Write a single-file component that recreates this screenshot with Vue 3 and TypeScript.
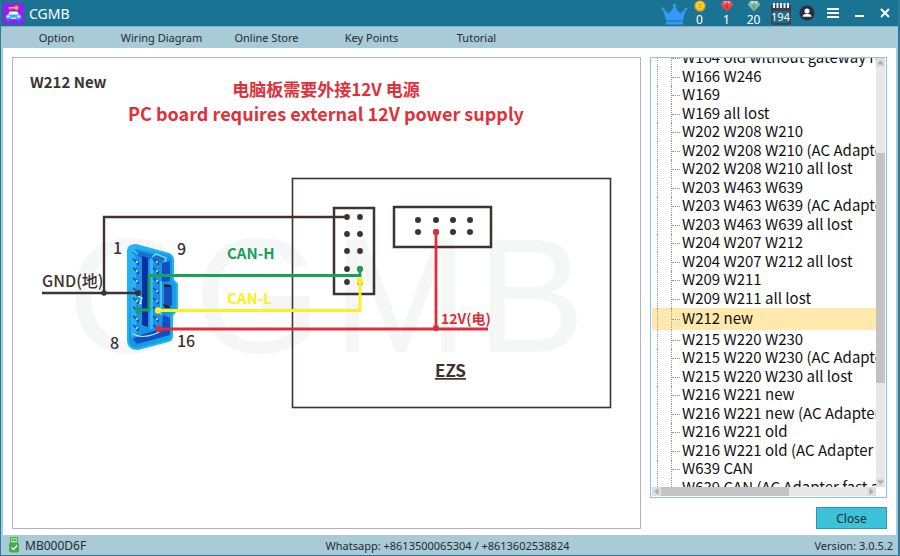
<script setup lang="ts">
import { onMounted, ref } from 'vue'

interface Point {
  x: number
  y: number
}

const menus: string[] = ['Option', 'Wiring Diagram', 'Online Store', 'Key Points', 'Tutorial']

const systems: string[] = [
  'W164 old without gateway read',
  'W166 W246',
  'W169',
  'W169 all lost',
  'W202 W208 W210',
  'W202 W208 W210 (AC Adapter fast)',
  'W202 W208 W210 all lost',
  'W203 W463 W639',
  'W203 W463 W639 (AC Adapter fast)',
  'W203 W463 W639 all lost',
  'W204 W207 W212',
  'W204 W207 W212 all lost',
  'W209 W211',
  'W209 W211 all lost',
  'W212 new',
  'W215 W220 W230',
  'W215 W220 W230 (AC Adapter fast)',
  'W215 W220 W230 all lost',
  'W216 W221 new',
  'W216 W221 new (AC Adapter fast)',
  'W216 W221 old',
  'W216 W221 old (AC Adapter fast)',
  'W639 CAN',
  'W639 CAN (AC Adapter fast all)',
]

const selected = ref('W212 new')
const viewport = ref<HTMLElement | null>(null)

onMounted(() => {
  if (viewport.value) viewport.value.scrollTop = 9
})

const grid = (xs: number[], ys: number[]): Point[] =>
  ys.flatMap((y) => xs.map((x) => ({ x, y })))

const tallHeader = grid([347, 360], [217, 234, 251, 269, 282])
const wideHeader = grid([418, 436, 453, 470], [220, 232])
const obdRows: number[] = [262, 271, 281, 291, 301, 310, 319, 328]
</script>

<template>
  <div class="window">
    <header class="titlebar">
      <svg class="logo" viewBox="0 0 22 22" aria-hidden="true">
        <rect width="22" height="22" fill="#9220f5" />
        <path d="M6 5h7" stroke="#ffb01f" stroke-width="1.6" />
        <path d="M7 5v2M9 5v1.6" stroke="#ff8a3c" stroke-width="1.2" />
        <circle cx="14" cy="5" r="2.4" fill="#ff9c2b" />
        <path d="M7 9h8l2 4H5z" fill="#f3fbff" />
        <path d="M4 12h14l1 2v3H3v-3z" fill="#39a6ff" />
        <path d="M4 17h3v2H4zM15 17h3v2h-3z" fill="#2378ee" />
        <path d="M4 14h3M15 14h3" stroke="#fff" stroke-width="1.6" />
        <path d="M8 16h6" stroke="#d5f0ff" stroke-width="1.4" />
      </svg>
      <h1>CGMB</h1>
      <div class="tools">
        <span class="stat level">
          <svg class="crown" viewBox="0 0 27 22" aria-hidden="true">
            <path d="M2 6l6 4.500L13.500 3l5.500 7.500L25 6l-3 11.500H5z" fill="#3399fb" />
            <rect x="5" y="18.500" width="17" height="3" fill="#3399fb" />
            <circle cx="2" cy="6" r="1.500" fill="#3399fb" />
            <circle cx="13.500" cy="2.400" r="1.700" fill="#3399fb" />
            <circle cx="25" cy="6" r="1.500" fill="#3399fb" />
          </svg>
        </span>
        <span class="stat">
          <svg class="gem" viewBox="0 0 14 12" aria-hidden="true">
            <circle cx="7" cy="6" r="5.600" fill="#e9a51c" />
            <circle cx="7" cy="5.600" r="4.200" fill="#ffd02f" />
            <path d="M5 4.500h4M5 7h4" stroke="#d79412" />
          </svg>
          <span>0</span>
        </span>
        <span class="stat">
          <svg class="gem" viewBox="0 0 14 12" aria-hidden="true">
            <path d="M3.500 1h7L13.500 4.500 7 11.500.5 4.500z" fill="#f04a50" />
            <path d="M3.500 1L5 4.500 7 1l2 3.500L10.500 1z" fill="#ff9a97" />
            <path d="M5 4.500h4L7 11.500z" fill="#e22e3b" />
          </svg>
          <span>1</span>
        </span>
        <span class="stat">
          <svg class="gem" viewBox="0 0 14 12" aria-hidden="true">
            <path d="M3.500 1h7L13.500 4.500 7 11.500.5 4.500z" fill="#86b7a0" />
            <path d="M3.500 1L5 4.500 7 1l2 3.500L10.500 1z" fill="#cfe6d6" />
            <path d="M5 4.500h4L7 11.500z" fill="#6ba28b" />
          </svg>
          <span>20</span>
        </span>
        <span class="stat calendar">
          <svg viewBox="0 0 22 24" aria-hidden="true">
            <rect x="2" y="4" width="18" height="18" rx="2" fill="#216a88" stroke="#404650" stroke-width="2" />
            <rect x="1" y="3" width="20" height="6" rx="2" fill="#3d4048" />
            <path d="M4 1v5M7.500 1v5M11 1v5M14.500 1v5M18 1v5" stroke="#eef3f5" stroke-width="2" />
          </svg>
          <span>194</span>
        </span>
        <button type="button" aria-label="Account">
          <svg class="user" viewBox="0 0 16 16" aria-hidden="true">
            <circle cx="8" cy="8" r="7.600" fill="#2b2d42" />
            <circle cx="8" cy="6" r="2.500" fill="#fff" />
            <path d="M3.500 11.700c.3-2.200 2-3 4.500-3s4.200.8 4.500 3z" fill="#fff" />
          </svg>
        </button>
        <button type="button" aria-label="Menu">
          <svg class="glyph" viewBox="0 0 12 12" aria-hidden="true">
            <path d="M0 2h12M0 6h12M0 10h12" stroke="#fff" stroke-width="2" />
          </svg>
        </button>
        <button type="button" aria-label="Minimize">
          <svg class="glyph" viewBox="0 0 12 12" aria-hidden="true">
            <path d="M2 9h9" stroke="#fff" stroke-width="2" />
          </svg>
        </button>
        <button type="button" aria-label="Close window">
          <svg class="glyph" viewBox="0 0 12 12" aria-hidden="true">
            <path d="M2 2l8 8M10 2l-8 8" stroke="#fff" stroke-width="2" />
          </svg>
        </button>
      </div>
    </header>

    <nav class="menubar">
      <button v-for="menu in menus" :key="menu" type="button">{{ menu }}</button>
    </nav>

    <main class="content">
      <section class="diagram">
        <svg viewBox="13 58 627 470" role="img" aria-label="W212 New wiring diagram">
          <defs>
            <linearGradient id="shell" x1="0" y1="0" x2="1" y2="1">
              <stop offset="0" stop-color="#28bdf2" />
              <stop offset="0.5" stop-color="#1494e8" />
              <stop offset="1" stop-color="#19a9ee" />
            </linearGradient>
          </defs>

          <g class="watermark">
            <text x="67" y="352">C</text>
            <text x="194" y="352">G</text>
            <text x="332" y="352">M</text>
            <text x="476" y="352">B</text>
          </g>

          <g class="frame">
            <rect x="292.500" y="178.500" width="318" height="229" stroke-width="1.600" />
            <rect x="334" y="208" width="40" height="86" stroke-width="2.500" />
            <rect x="394" y="207" width="97" height="40" stroke-width="2.500" />
          </g>
          <circle v-for="p in tallHeader" :key="`t${p.x}-${p.y}`" class="pin" :cx="p.x" :cy="p.y" r="2.900" />
          <circle v-for="p in wideHeader" :key="`w${p.x}-${p.y}`" class="pin" :cx="p.x" :cy="p.y" r="3" />

          <path
            d="M128 251q0-6 8-6l33 9q4 2 4 6v20l4 4v25l-5 7v20q0 4-4 5l-30 8q-10 0-10-9z"
            fill="url(#shell)"
            stroke="#22b4f0"
            stroke-width="2"
          />
          <path d="M132 252q1-3 5-3l30 8q3 1 3 4v22h-6v29l6 4v18l-33 9q-5 0-5-5z" fill="#1a93e6" />
          <path d="M131 252l5 5v75l-5 7z" fill="#2bb0f2" />
          <path d="M134 250l31 8-4 5-22-6z" fill="#1670d4" />
          <path d="M142 256l6 2v69l-6-2z" fill="#092e9e" />
          <path d="M150 258l3 1v69l-3 2z" fill="#38b6f5" />
          <path d="M162 263l8-2v20l-8 1zM164 286h8v20h-8zM163 315l7 3v17l-33 9-4-5 8-4 21-7z" fill="#1150bd" />
          <path d="M133 334q8 5 22 0l6-3" fill="none" stroke="#b9e9fb" stroke-width="1.200" />
          <path d="M152 257l4-3 10 4-1 4" fill="none" stroke="#8cdcfa" stroke-width="1.300" />
          <path d="M161 281v34M133 250l5 4" fill="none" stroke="#5bcdf7" stroke-width="1.500" />
          <g v-for="y in obdRows" :key="y">
            <path :d="`M133 ${y - 3}l4 3M153 ${y - 3}l4 3`" stroke="#0d58bf" stroke-width="2" />
            <path :d="`M138 ${y}v3M158 ${y}v3`" stroke="#183d78" stroke-width="1.500" />
            <path :d="`M136 ${y}h2M156 ${y}h2`" stroke="#c4ecfc" stroke-width="1.500" />
          </g>
          <path d="M164 284l7 1v2h-7zM163 304l6 2 2 2h-6z" fill="#2a2420" />
          <path d="M138 296l4 2-2 5M139 304l3-1" fill="none" stroke="#cdeefa" stroke-width="1.300" />

          <g class="wires">
            <path d="M42 293H138M104 293V217H347" stroke="#3c3332" stroke-width="2.400" />
            <path d="M138 310h11V275.500H360V269" stroke="#17a159" stroke-width="2.800" />
            <path d="M158 310.500H360V282" stroke="#fdf01c" stroke-width="2.800" />
            <path d="M159 329H488M436 232V329" stroke="#e22d38" stroke-width="2.800" />
          </g>
          <circle cx="104" cy="293" r="2.800" fill="#3c3332" />
          <circle cx="138" cy="293" r="3" fill="#3c3332" />
          <circle cx="138" cy="310" r="3" fill="#17a159" />
          <circle cx="360" cy="269" r="3" fill="#17a159" />
          <circle cx="158" cy="310.500" r="3.200" fill="#fdf01c" />
          <circle cx="360" cy="281" r="3.200" fill="#fdf01c" />
          <circle cx="159" cy="329" r="3.200" fill="#e22d38" />
          <circle cx="436" cy="232" r="3" fill="#e22d38" />
          <circle cx="436" cy="328" r="3" fill="#e22d38" />

          <g class="labels">
            <text class="strong" x="30" y="88">W212 New</text>
            <text x="113" y="254">1</text>
            <text x="177" y="255">9</text>
            <text x="110" y="349">8</text>
            <text x="177" y="347">16</text>
            <text x="42" y="287">GND(地)</text>
            <text class="strong green" x="227" y="259">CAN-H</text>
            <text class="strong yellow" x="227" y="304">CAN-L</text>
            <text class="strong red small" x="441" y="324">12V(电)</text>
            <text class="strong medium underlined" x="435" y="377">EZS</text>
            <text class="strong red medium" x="326" y="96" text-anchor="middle">电脑板需要外接12V 电源</text>
            <text class="strong red large" x="326" y="121" text-anchor="middle">PC board requires external 12V power supply</text>
          </g>
        </svg>
      </section>

      <aside class="side">
        <div class="tree">
          <div ref="viewport" class="viewport">
            <ul>
              <li v-for="name in systems" :key="name" :class="{ selected: name === selected }">
                <button type="button" @click="selected = name">{{ name }}</button>
              </li>
            </ul>
          </div>
          <div class="vbar">
            <svg viewBox="0 0 9 9" aria-hidden="true"><path d="M1 6.500L4.500 2.500 8 6.500z" /></svg>
            <div class="vtrack"><div class="vthumb"></div></div>
            <svg viewBox="0 0 9 9" aria-hidden="true"><path d="M1 2.500L4.500 6.500 8 2.500z" /></svg>
          </div>
          <div class="hbar">
            <svg viewBox="0 0 9 9" aria-hidden="true"><path d="M6.500 1L2.500 4.500 6.500 8z" /></svg>
            <div class="htrack"><div class="hthumb"></div></div>
            <svg viewBox="0 0 9 9" aria-hidden="true"><path d="M2.500 1L6.500 4.500 2.500 8z" /></svg>
          </div>
        </div>
        <button class="close" type="button">Close</button>
      </aside>
    </main>

    <footer class="statusbar">
      <div class="device">
        <svg viewBox="0 0 12 16" aria-hidden="true">
          <rect x="2.500" y="0.500" width="7" height="6" fill="#a9e0ae" stroke="#45b04b" />
          <path d="M4 3h1.500M6.500 3H8" stroke="#2f9438" stroke-width="1.500" />
          <rect x="1" y="5.500" width="10" height="10" rx="2" fill="#3fae45" />
          <path d="M3.500 10.500l2 2 3.500-4" fill="none" stroke="#fff" stroke-width="1.400" />
        </svg>
        <span>MB000D6F</span>
      </div>
      <span class="contact">Whatsapp: +8613500065304 / +8613602538824</span>
      <span class="version">Version: 3.0.5.2</span>
    </footer>
  </div>
</template>

<style>
body {
  margin: 0;
}
</style>

<style scoped>
.window {
  box-sizing: border-box;
  display: flex;
  flex-direction: column;
  height: 100vh;
  border: 1px solid #2b7c9b;
  border-top: 0;
  border-right-width: 2px;
  background: #a9cad7;
  color: #1e2b33;
  font-family: "Noto Sans", "Open Sans", sans-serif;
  font-size: 11px;
}

button {
  padding: 0;
  border: 0;
  background: none;
  color: inherit;
  font: inherit;
}

.titlebar {
  display: flex;
  align-items: center;
  height: 26px;
  padding-left: 2px;
  background: #1b7394;
  color: #fff;
}

.logo {
  width: 21px;
  height: 21px;
}

h1 {
  margin: 0 0 0 5px;
  font-size: 14px;
  font-weight: 400;
}

.tools {
  display: flex;
  height: 26px;
  margin-left: auto;
}

.tools button {
  display: flex;
  align-items: center;
  justify-content: center;
  width: 26px;
}

.stat {
  display: flex;
  flex-direction: column;
  align-items: center;
  width: 27px;
  font-size: 12px;
  line-height: 16px;
}

.level {
  width: 24px;
}

.crown {
  width: 27px;
  height: 22px;
  margin-top: 3px;
}

.gem {
  flex: none;
  width: 14px;
  height: 12px;
}

.calendar {
  position: relative;
  justify-content: flex-end;
  font-size: 11px;
  line-height: 18px;
}

.calendar svg {
  position: absolute;
  top: 2px;
  width: 22px;
  height: 24px;
}

.calendar span {
  position: relative;
}

.user {
  width: 16px;
  height: 16px;
}

.glyph {
  width: 12px;
  height: 12px;
}

.menubar {
  display: flex;
  height: 21px;
  padding-left: 3px;
  border-top: 1px solid #7fb0c3;
}

.menubar button {
  width: 105px;
}

.content {
  display: flex;
  flex: 1;
  gap: 9px;
  min-height: 0;
  margin: 0 2px;
  padding: 9px 9px 6px;
  background: #fff;
}

.diagram {
  flex: 1;
  min-width: 0;
  border: 1px solid #b4b4b4;
}

.diagram svg {
  display: block;
  width: 100%;
  height: 100%;
}

.watermark {
  fill: #f5f7f7;
  font-family: "Liberation Sans", sans-serif;
  font-size: 164px;
}

.frame {
  fill: none;
  stroke: #3c3332;
}

.pin {
  fill: #3c3332;
}

.wires {
  fill: none;
}

.labels {
  fill: #3c3332;
  font-family: "Noto Sans CJK SC", sans-serif;
  font-size: 16px;
  font-weight: 500;
}

.labels .strong {
  font-size: 15px;
  font-weight: 700;
}

.labels .large {
  font-size: 18px;
}

.labels .medium {
  font-size: 17px;
}

.labels .small {
  font-size: 14px;
}

.labels .red {
  fill: #e0303a;
}

.labels .green {
  fill: #17a159;
}

.labels .yellow {
  fill: #fdf01c;
}

.underlined {
  text-decoration: underline;
}

.side {
  display: flex;
  flex-direction: column;
  align-items: flex-end;
  gap: 9px;
  width: 237px;
}

.tree {
  display: grid;
  flex: 1;
  grid-template-rows: minmax(0, 1fr) 9px;
  grid-template-columns: minmax(0, 1fr) 9px;
  align-self: stretch;
  min-height: 0;
  padding: 0 1px 1px;
  border: 1px solid #84c3fa;
}

.viewport {
  overflow: hidden;
}

ul {
  margin: 0;
  padding: 0;
  list-style: none;
}

li {
  position: relative;
  display: flex;
  align-items: center;
  height: 18px;
  padding-left: 30px;
  color: #111;
  font-family: "Noto Sans CJK SC", sans-serif;
  font-size: 15px;
  white-space: nowrap;
}

li:nth-child(even) {
  height: 19px;
}

/* Guide lines of the two parent levels and the branch to this item. */
li::before {
  position: absolute;
  top: 0;
  bottom: 0;
  left: 5px;
  width: 13px;
  border-right: 1px dotted #999;
  border-left: 1px dotted #999;
  content: "";
}

li::after {
  position: absolute;
  top: 50%;
  left: 20px;
  width: 8px;
  border-top: 1px dotted #999;
  content: "";
}

li button {
  padding-bottom: 2px;
  line-height: 16px;
}

li.selected {
  height: 22px;
  background: #ffe9ad;
}

.vbar {
  display: flex;
  flex-direction: column;
  background: #e8e8e8;
}

.hbar {
  display: flex;
  background: #e8e8e8;
}

.vbar svg,
.hbar svg {
  width: 9px;
  height: 9px;
  background: #dedede;
  fill: #aaa;
}

.vtrack,
.htrack {
  display: flex;
  flex: 1;
}

.vtrack {
  flex-direction: column;
}

.vthumb {
  height: 56%;
  margin-top: 86px;
  background: #c3c3c3;
}

.hthumb {
  width: 62%;
  background: #c3c3c3;
}

.close {
  width: 71px;
  height: 22px;
  border: 1px solid #3a93a5;
  background: #3cc3da;
  font-size: 12px;
}

.statusbar {
  display: grid;
  grid-template-columns: 1fr auto 1fr;
  align-items: center;
  height: 20px;
  padding: 0 5px 0 7px;
}

.device {
  display: flex;
  align-items: center;
  gap: 5px;
  font-size: 12px;
}

.device svg {
  width: 12px;
  height: 16px;
}

.contact {
  padding-right: 6px;
}

.version {
  text-align: right;
}
</style>
